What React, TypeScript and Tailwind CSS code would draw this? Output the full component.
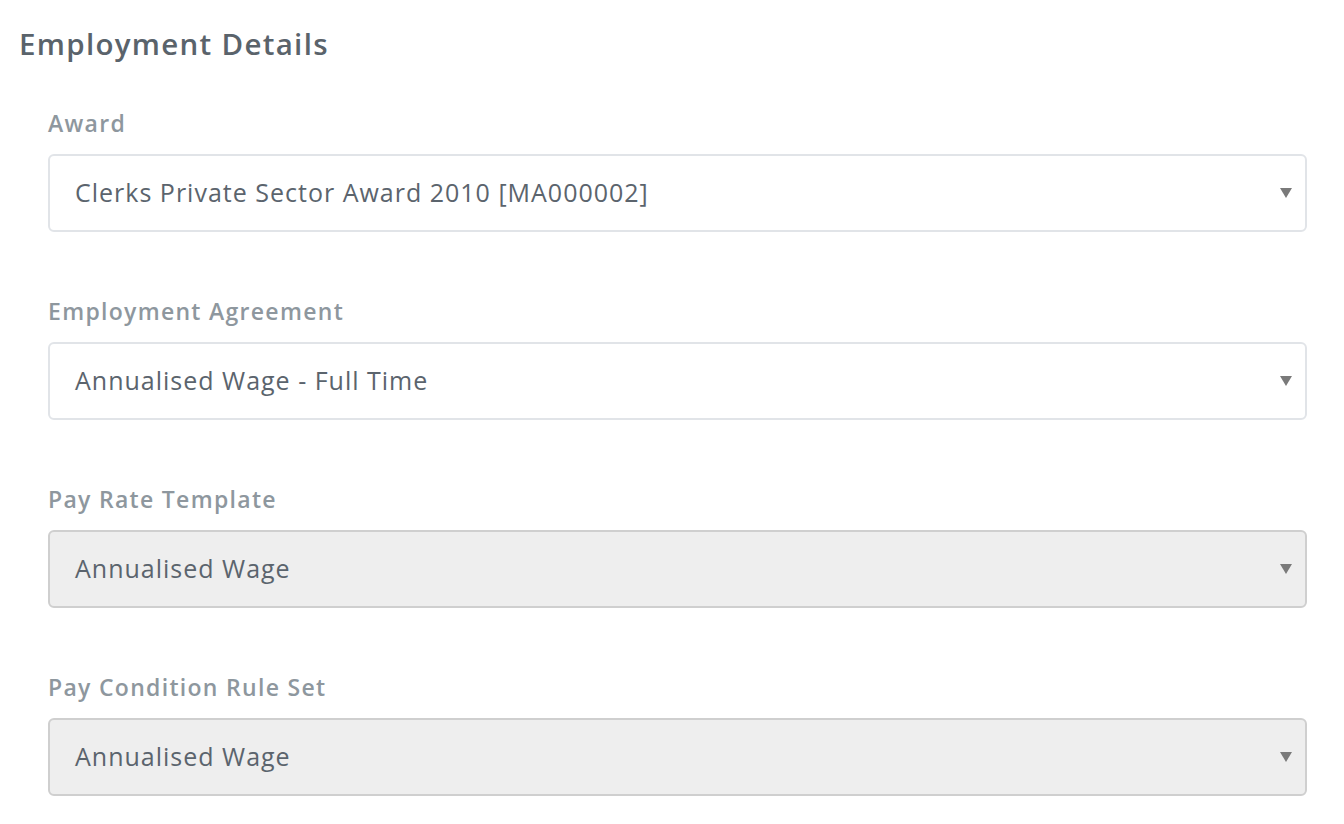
import React from 'react'

type Field = {
  label: string
  value: string
  disabled?: boolean
}

const fields: Field[] = [
  { label: 'Award', value: 'Clerks Private Sector Award 2010 [MA000002]' },
  { label: 'Employment Agreement', value: 'Annualised Wage - Full Time' },
  { label: 'Pay Rate Template', value: 'Annualised Wage', disabled: true },
  { label: 'Pay Condition Rule Set', value: 'Annualised Wage', disabled: true },
]

function SelectBox({ value, disabled }: { value: string; disabled?: boolean }) {
  return (
    <div
      className={
        disabled
          ? 'flex h-[78px] items-center justify-between rounded-[6px] border-2 border-[#cfcfcf] bg-[#eeeeee] pl-[25px] pr-[12px]'
          : 'flex h-[78px] items-center justify-between rounded-[6px] border-2 border-[#e1e4e8] bg-white pl-[25px] pr-[12px]'
      }
    >
      <span className="text-[25px] tracking-[1px] text-[#5b646d]">{value}</span>
      <svg width="12" height="10" viewBox="0 0 12 10" className="mr-[1px]">
        <path d="M0 0 H12 L6 10 Z" fill="#7a7a7a" />
      </svg>
    </div>
  )
}

export default function App() {
  return (
    <div className="min-h-screen bg-white font-['Open_Sans',sans-serif]">
      <div className="pt-[22px] pl-[19px] pr-[37px]">
        <h1 className="text-[29.5px] font-semibold leading-[44px] tracking-[1.3px] text-[#5a636b]">Employment Details</h1>
        <div className="mt-[42px] flex flex-col gap-[64px] pl-[29px]">
          {fields.map((f) => (
            <div key={f.label} className="flex flex-col gap-[16px]">
              <label className="text-[23px] font-semibold leading-[30px] tracking-[1.3px] text-[#8e979e]">{f.label}</label>
              <SelectBox value={f.value} disabled={f.disabled} />
            </div>
          ))}
        </div>
      </div>
    </div>
  )
}
